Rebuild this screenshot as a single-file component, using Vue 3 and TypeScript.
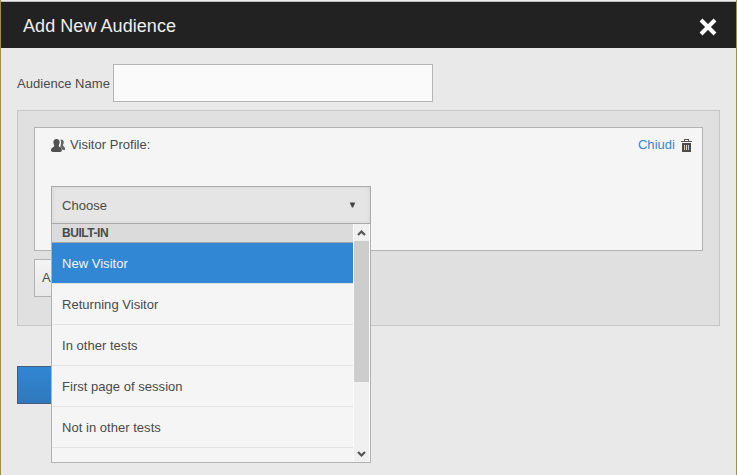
<script setup lang="ts">
import { ref } from 'vue'

const audienceName = ref('')
const selected = ref('New Visitor')
const options: string[] = [
  'New Visitor',
  'Returning Visitor',
  'In other tests',
  'First page of session',
  'Not in other tests',
]
</script>

<template>
  <div class="dialog">
    <header class="header">
      <h1 class="title">Add New Audience</h1>
      <button class="close" aria-label="Close">
        <svg width="18" height="18" viewBox="0 0 18 18">
          <path d="M2 2 L16 16 M16 2 L2 16" fill="none" stroke="#fff" stroke-width="4" />
        </svg>
      </button>
    </header>
    <main class="body">
      <label class="name-row">
        <span class="name-label">Audience Name</span>
        <input v-model="audienceName" class="name-input" type="text" />
      </label>
      <section class="panel">
        <div class="card">
          <div class="card-head">
            <svg class="people" width="14" height="13" viewBox="0 0 14 13">
              <path
                fill="#666"
                d="M9.500 .5c1.900-.4 3.500.8 3.300 3-.1 1.200-.8 1.900-.8 2.700.1 1 1.800 1.600 2 2.900V11h-2.400c-.4-1.600-2.400-1.800-2.500-2.700C9.600 7 10.200 4.500 10 3.200 9.900 2 9.700 1.500 9.500 .5z"
              />
              <path
                fill="#505050"
                d="M5.500 0C7.700 0 8.800 1.300 8.600 3.500 8.500 5 7.800 5.800 7.700 7c.2 1.300 2.800 1.500 3.100 3.400V12l-1.300 1H1.500L0 12v-1.600C.3 8.500 3.100 8.300 3.300 7 3.200 5.800 2.500 5 2.400 3.500 2.200 1.300 3.300 0 5.500 0z"
              />
            </svg>
            <span class="card-title">Visitor Profile:</span>
            <a class="toggle">Chiudi</a>
            <svg class="trash" width="11" height="13" viewBox="0 0 11 13">
              <path fill="#555" d="M3 2V0h5v2h3v1H0V2zM4 1v1h3V1z" fill-rule="evenodd" />
              <path fill="#4f4a4c" d="M1 4h9v9H1z" />
              <path fill="#d9c5a0" d="M3 6h1v5H3z" />
              <path fill="#e4dcd8" d="M5 6h1v5H5z" />
              <path fill="#b6cbe0" d="M7 6h1v5H7z" />
            </svg>
          </div>
          <div class="select">
            <div class="select-value">
              <span class="select-text">Choose</span>
              <svg width="7" height="6" viewBox="0 0 7 6">
                <path fill="#444" d="M.7 .5h5.600L4.100 5.500H2.900z" />
              </svg>
            </div>
            <div class="menu">
              <div class="menu-list">
                <div class="group">BUILT-IN</div>
                <div
                  v-for="option in options"
                  :key="option"
                  class="option"
                  :class="{ active: option === selected }"
                  @click="selected = option"
                >
                  {{ option }}
                </div>
              </div>
              <div class="scrollbar">
                <svg class="arrow" width="15" height="17" viewBox="0 0 15 17">
                  <path d="M4 11 L7.500 7.500 L11 11" fill="none" stroke="#555" stroke-width="2.200" />
                </svg>
                <div class="thumb"></div>
                <svg class="arrow down" width="15" height="17" viewBox="0 0 15 17">
                  <path d="M4 7 L7.500 10.500 L11 7" fill="none" stroke="#555" stroke-width="2.200" />
                </svg>
              </div>
            </div>
          </div>
        </div>
        <button class="add">Add</button>
      </section>
      <button class="save" aria-label="Save"></button>
    </main>
  </div>
</template>

<style>
body {
  background: #e9e9e9;
}
</style>

<style scoped>
* {
  box-sizing: border-box;
}
.dialog {
  height: 475px;
  overflow: hidden;
  border: solid #a38d4d;
  border-width: 0 1px;
  background: #e9e9e9;
  color: #4a4a4a;
  font: 13px/18px "Liberation Sans", Arial, sans-serif;
  letter-spacing: 0.03px;
}
.header {
  height: 48px;
  padding: 0 19px 0 22px;
  border-top: 1px solid #efefef;
  box-shadow: inset 0 1px #b9bdbd;
  background: #222;
  display: flex;
  align-items: center;
  justify-content: space-between;
}
.title {
  margin: 3px 0 0;
  color: #eee;
  font-size: 18px;
  font-weight: 400;
  letter-spacing: 0.06px;
}
.close {
  height: 18px;
  margin-top: 4px;
  padding: 0;
  border: 0;
  background: none;
}
.close svg {
  display: block;
}
.body {
  padding: 16px;
}
.name-row {
  display: flex;
  align-items: center;
}
.name-label {
  width: 96px;
  padding-top: 1px;
  white-space: nowrap;
}
.name-input {
  width: 320px;
  height: 38px;
  border: 1px solid #b5b5b5;
  background: #fafafa;
  outline: 0;
}
.panel {
  height: 216px;
  margin-top: 8px;
  padding: 16px;
  border: 1px solid #c6c6c6;
  background: #e0e0e0;
}
.card {
  height: 124px;
  padding: 8px 10px 0 16px;
  border: 1px solid #b2b2b2;
  background: #f5f5f5;
}
.card-head {
  display: flex;
  align-items: center;
  height: 18px;
}
.people {
  margin: 0 5px 0 0;
}
.toggle {
  margin: 0 6px 0 auto;
  color: #3187d3;
}
.select {
  position: relative;
  z-index: 1;
  width: 320px;
  margin-top: 32px;
}
.select-value {
  height: 38px;
  padding: 0 14px 0 10px;
  border: 1px solid #aaa;
  background: #e5e5e5;
  box-shadow: inset 0 0 5px rgba(0, 0, 0, 0.07);
  display: flex;
  align-items: center;
  justify-content: space-between;
}
.select-text {
  padding-top: 1px;
}
.menu {
  position: absolute;
  top: 38px;
  left: 0;
  width: 320px;
  height: 239px;
  border: 1px solid #b2b2b2;
  border-top: 0;
  background: #f5f5f5;
  display: flex;
}
.menu-list {
  flex: 1;
}
.group {
  height: 19px;
  padding-left: 10px;
  border-bottom: 1px solid #a6a6a6;
  background: #dbdbdb;
  font-size: 12px;
  font-weight: 700;
  letter-spacing: -0.45px;
}
.option {
  height: 41px;
  padding-left: 10px;
  border-bottom: 1px solid #e3e3e3;
  line-height: 41px;
}
.option.active {
  background: #3187d3;
  color: #f4f4f4;
}
.scrollbar {
  width: 17px;
  border: solid #fafafa;
  border-width: 0 1px;
  background: #f0f0f0;
  display: flex;
  flex-direction: column;
}
.arrow {
  display: block;
}
.down {
  margin-top: auto;
}
.thumb {
  height: 141px;
  background: #cdcdcd;
}
.add,
.save {
  display: block;
  height: 38px;
  font: inherit;
  letter-spacing: inherit;
  text-align: left;
}
.add {
  width: 60px;
  margin-top: 8px;
  padding: 0 7px;
  border: 1px solid #b2b2b2;
  background: linear-gradient(#f4f4f4, #e8e8e8);
  color: #4a4a4a;
}
.save {
  width: 80px;
  margin-top: 40px;
  padding: 0;
  border: 1px solid #455c7c;
  background: linear-gradient(#3187d3, #3078bd);
}
</style>
